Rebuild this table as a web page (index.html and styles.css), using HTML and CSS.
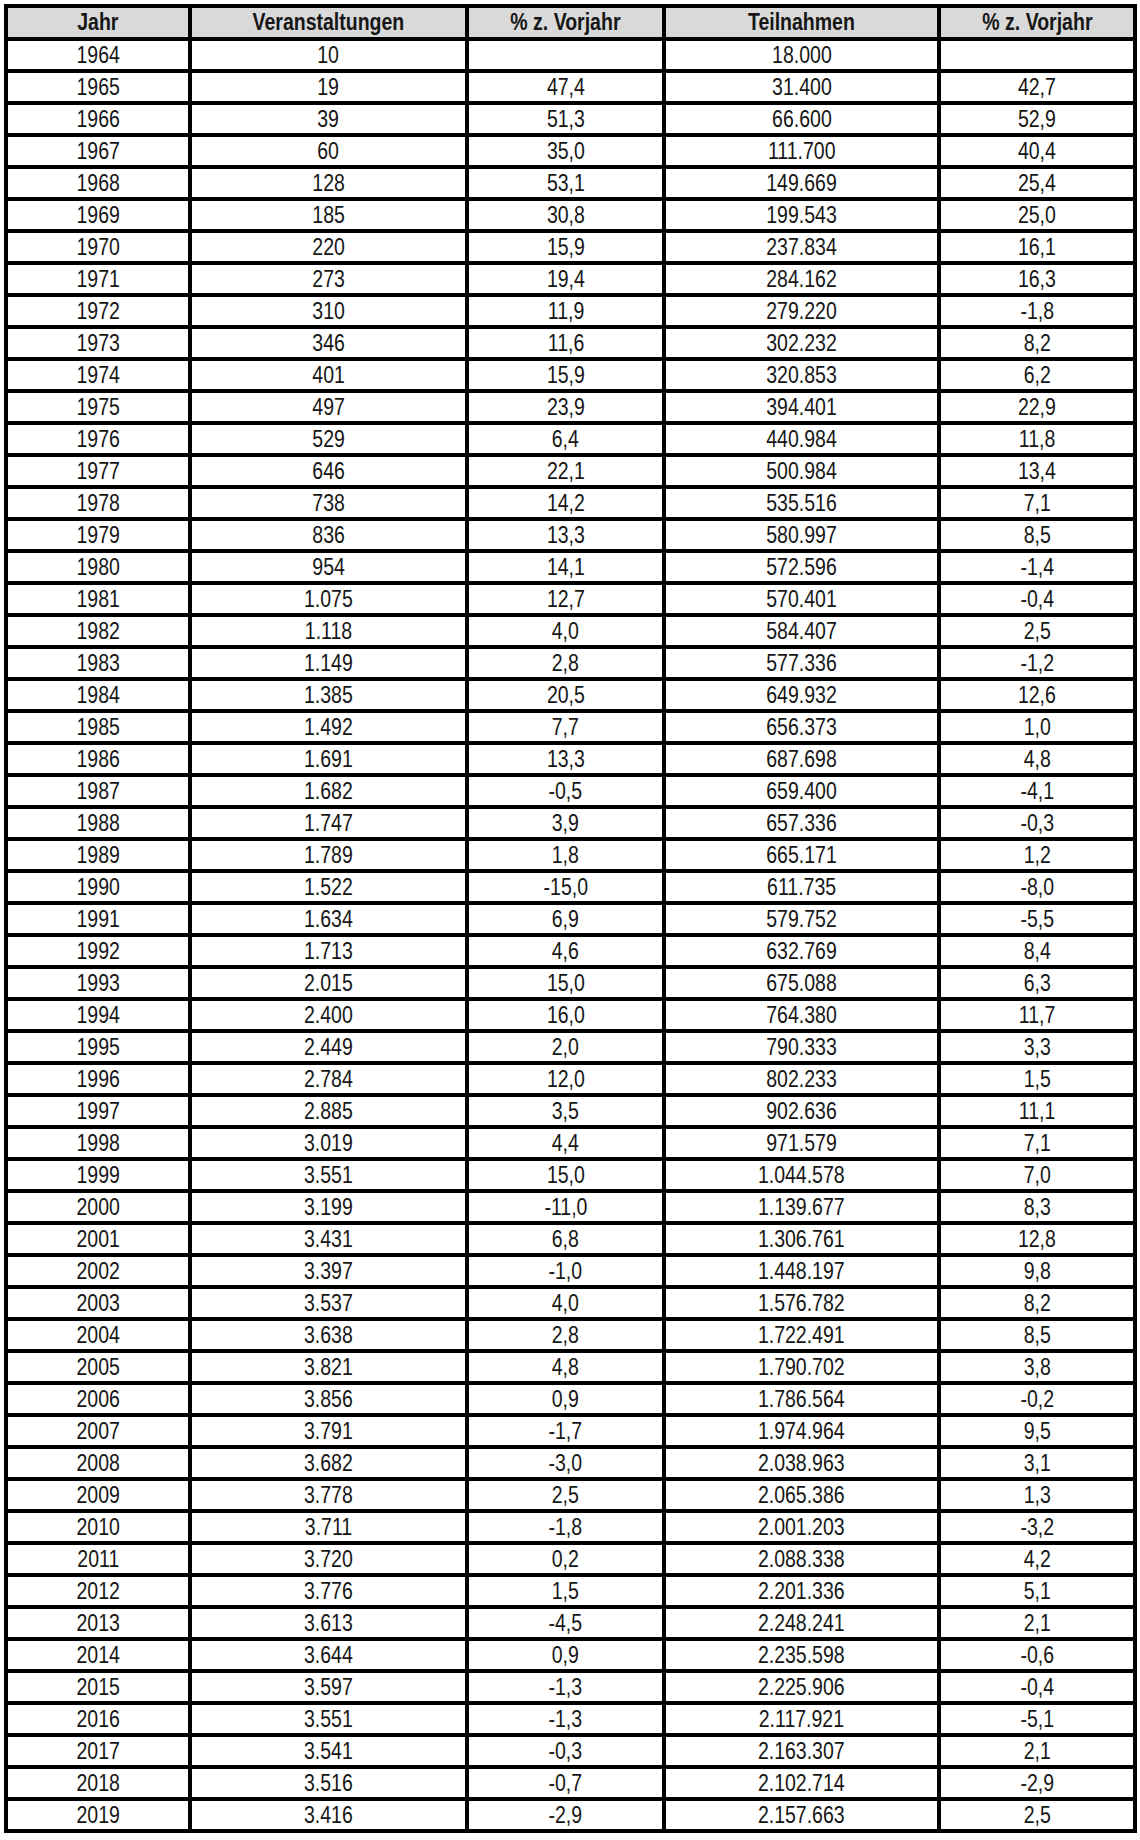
FILE: index.html
```html
<!DOCTYPE html>
<html lang="de">
<head>
<meta charset="utf-8">
<title>Veranstaltungen und Teilnahmen</title>
<link rel="stylesheet" href="styles.css">
</head>
<body>
<table class="stats">
<colgroup>
<col class="c-jahr"><col class="c-ver"><col class="c-p1"><col class="c-teil"><col class="c-p2">
</colgroup>
<thead>
<tr><th><span>Jahr</span></th><th><span>Veranstaltungen</span></th><th><span>% z. Vorjahr</span></th><th><span>Teilnahmen</span></th><th><span>% z. Vorjahr</span></th></tr>
</thead>
<tbody>
<tr><td><span>1964</span></td><td><span>10</span></td><td></td><td><span>18.000</span></td><td></td></tr>
<tr><td><span>1965</span></td><td><span>19</span></td><td><span>47,4</span></td><td><span>31.400</span></td><td><span>42,7</span></td></tr>
<tr><td><span>1966</span></td><td><span>39</span></td><td><span>51,3</span></td><td><span>66.600</span></td><td><span>52,9</span></td></tr>
<tr><td><span>1967</span></td><td><span>60</span></td><td><span>35,0</span></td><td><span>111.700</span></td><td><span>40,4</span></td></tr>
<tr><td><span>1968</span></td><td><span>128</span></td><td><span>53,1</span></td><td><span>149.669</span></td><td><span>25,4</span></td></tr>
<tr><td><span>1969</span></td><td><span>185</span></td><td><span>30,8</span></td><td><span>199.543</span></td><td><span>25,0</span></td></tr>
<tr><td><span>1970</span></td><td><span>220</span></td><td><span>15,9</span></td><td><span>237.834</span></td><td><span>16,1</span></td></tr>
<tr><td><span>1971</span></td><td><span>273</span></td><td><span>19,4</span></td><td><span>284.162</span></td><td><span>16,3</span></td></tr>
<tr><td><span>1972</span></td><td><span>310</span></td><td><span>11,9</span></td><td><span>279.220</span></td><td><span>-1,8</span></td></tr>
<tr><td><span>1973</span></td><td><span>346</span></td><td><span>11,6</span></td><td><span>302.232</span></td><td><span>8,2</span></td></tr>
<tr><td><span>1974</span></td><td><span>401</span></td><td><span>15,9</span></td><td><span>320.853</span></td><td><span>6,2</span></td></tr>
<tr><td><span>1975</span></td><td><span>497</span></td><td><span>23,9</span></td><td><span>394.401</span></td><td><span>22,9</span></td></tr>
<tr><td><span>1976</span></td><td><span>529</span></td><td><span>6,4</span></td><td><span>440.984</span></td><td><span>11,8</span></td></tr>
<tr><td><span>1977</span></td><td><span>646</span></td><td><span>22,1</span></td><td><span>500.984</span></td><td><span>13,4</span></td></tr>
<tr><td><span>1978</span></td><td><span>738</span></td><td><span>14,2</span></td><td><span>535.516</span></td><td><span>7,1</span></td></tr>
<tr><td><span>1979</span></td><td><span>836</span></td><td><span>13,3</span></td><td><span>580.997</span></td><td><span>8,5</span></td></tr>
<tr><td><span>1980</span></td><td><span>954</span></td><td><span>14,1</span></td><td><span>572.596</span></td><td><span>-1,4</span></td></tr>
<tr><td><span>1981</span></td><td><span>1.075</span></td><td><span>12,7</span></td><td><span>570.401</span></td><td><span>-0,4</span></td></tr>
<tr><td><span>1982</span></td><td><span>1.118</span></td><td><span>4,0</span></td><td><span>584.407</span></td><td><span>2,5</span></td></tr>
<tr><td><span>1983</span></td><td><span>1.149</span></td><td><span>2,8</span></td><td><span>577.336</span></td><td><span>-1,2</span></td></tr>
<tr><td><span>1984</span></td><td><span>1.385</span></td><td><span>20,5</span></td><td><span>649.932</span></td><td><span>12,6</span></td></tr>
<tr><td><span>1985</span></td><td><span>1.492</span></td><td><span>7,7</span></td><td><span>656.373</span></td><td><span>1,0</span></td></tr>
<tr><td><span>1986</span></td><td><span>1.691</span></td><td><span>13,3</span></td><td><span>687.698</span></td><td><span>4,8</span></td></tr>
<tr><td><span>1987</span></td><td><span>1.682</span></td><td><span>-0,5</span></td><td><span>659.400</span></td><td><span>-4,1</span></td></tr>
<tr><td><span>1988</span></td><td><span>1.747</span></td><td><span>3,9</span></td><td><span>657.336</span></td><td><span>-0,3</span></td></tr>
<tr><td><span>1989</span></td><td><span>1.789</span></td><td><span>1,8</span></td><td><span>665.171</span></td><td><span>1,2</span></td></tr>
<tr><td><span>1990</span></td><td><span>1.522</span></td><td><span>-15,0</span></td><td><span>611.735</span></td><td><span>-8,0</span></td></tr>
<tr><td><span>1991</span></td><td><span>1.634</span></td><td><span>6,9</span></td><td><span>579.752</span></td><td><span>-5,5</span></td></tr>
<tr><td><span>1992</span></td><td><span>1.713</span></td><td><span>4,6</span></td><td><span>632.769</span></td><td><span>8,4</span></td></tr>
<tr><td><span>1993</span></td><td><span>2.015</span></td><td><span>15,0</span></td><td><span>675.088</span></td><td><span>6,3</span></td></tr>
<tr><td><span>1994</span></td><td><span>2.400</span></td><td><span>16,0</span></td><td><span>764.380</span></td><td><span>11,7</span></td></tr>
<tr><td><span>1995</span></td><td><span>2.449</span></td><td><span>2,0</span></td><td><span>790.333</span></td><td><span>3,3</span></td></tr>
<tr><td><span>1996</span></td><td><span>2.784</span></td><td><span>12,0</span></td><td><span>802.233</span></td><td><span>1,5</span></td></tr>
<tr><td><span>1997</span></td><td><span>2.885</span></td><td><span>3,5</span></td><td><span>902.636</span></td><td><span>11,1</span></td></tr>
<tr><td><span>1998</span></td><td><span>3.019</span></td><td><span>4,4</span></td><td><span>971.579</span></td><td><span>7,1</span></td></tr>
<tr><td><span>1999</span></td><td><span>3.551</span></td><td><span>15,0</span></td><td><span>1.044.578</span></td><td><span>7,0</span></td></tr>
<tr><td><span>2000</span></td><td><span>3.199</span></td><td><span>-11,0</span></td><td><span>1.139.677</span></td><td><span>8,3</span></td></tr>
<tr><td><span>2001</span></td><td><span>3.431</span></td><td><span>6,8</span></td><td><span>1.306.761</span></td><td><span>12,8</span></td></tr>
<tr><td><span>2002</span></td><td><span>3.397</span></td><td><span>-1,0</span></td><td><span>1.448.197</span></td><td><span>9,8</span></td></tr>
<tr><td><span>2003</span></td><td><span>3.537</span></td><td><span>4,0</span></td><td><span>1.576.782</span></td><td><span>8,2</span></td></tr>
<tr><td><span>2004</span></td><td><span>3.638</span></td><td><span>2,8</span></td><td><span>1.722.491</span></td><td><span>8,5</span></td></tr>
<tr><td><span>2005</span></td><td><span>3.821</span></td><td><span>4,8</span></td><td><span>1.790.702</span></td><td><span>3,8</span></td></tr>
<tr><td><span>2006</span></td><td><span>3.856</span></td><td><span>0,9</span></td><td><span>1.786.564</span></td><td><span>-0,2</span></td></tr>
<tr><td><span>2007</span></td><td><span>3.791</span></td><td><span>-1,7</span></td><td><span>1.974.964</span></td><td><span>9,5</span></td></tr>
<tr><td><span>2008</span></td><td><span>3.682</span></td><td><span>-3,0</span></td><td><span>2.038.963</span></td><td><span>3,1</span></td></tr>
<tr><td><span>2009</span></td><td><span>3.778</span></td><td><span>2,5</span></td><td><span>2.065.386</span></td><td><span>1,3</span></td></tr>
<tr><td><span>2010</span></td><td><span>3.711</span></td><td><span>-1,8</span></td><td><span>2.001.203</span></td><td><span>-3,2</span></td></tr>
<tr><td><span>2011</span></td><td><span>3.720</span></td><td><span>0,2</span></td><td><span>2.088.338</span></td><td><span>4,2</span></td></tr>
<tr><td><span>2012</span></td><td><span>3.776</span></td><td><span>1,5</span></td><td><span>2.201.336</span></td><td><span>5,1</span></td></tr>
<tr><td><span>2013</span></td><td><span>3.613</span></td><td><span>-4,5</span></td><td><span>2.248.241</span></td><td><span>2,1</span></td></tr>
<tr><td><span>2014</span></td><td><span>3.644</span></td><td><span>0,9</span></td><td><span>2.235.598</span></td><td><span>-0,6</span></td></tr>
<tr><td><span>2015</span></td><td><span>3.597</span></td><td><span>-1,3</span></td><td><span>2.225.906</span></td><td><span>-0,4</span></td></tr>
<tr><td><span>2016</span></td><td><span>3.551</span></td><td><span>-1,3</span></td><td><span>2.117.921</span></td><td><span>-5,1</span></td></tr>
<tr><td><span>2017</span></td><td><span>3.541</span></td><td><span>-0,3</span></td><td><span>2.163.307</span></td><td><span>2,1</span></td></tr>
<tr><td><span>2018</span></td><td><span>3.516</span></td><td><span>-0,7</span></td><td><span>2.102.714</span></td><td><span>-2,9</span></td></tr>
<tr><td><span>2019</span></td><td><span>3.416</span></td><td><span>-2,9</span></td><td><span>2.157.663</span></td><td><span>2,5</span></td></tr>
</tbody>
</table>
</body>
</html>
```
FILE: styles.css
```css
html, body {
  margin: 0;
  padding: 0;
  background: #ffffff;
}

body {
  padding: 4px 0 0 4px;
  font-family: "Liberation Sans", Arial, sans-serif;
  color: #161616;
}

.stats {
  border-collapse: collapse;
  table-layout: fixed;
  width: 1129px;
  font-size: 23.5px;
}

.c-jahr { width: 184px; }
.c-ver { width: 277px; }
.c-p1 { width: 197px; }
.c-teil { width: 275px; }
.c-p2 { width: 196px; }

.stats th,
.stats td {
  border: 4px solid #000;
  padding: 0;
  text-align: center;
  vertical-align: middle;
  white-space: nowrap;
}

/* narrow (Arial Narrow–like) lettering */
.stats th span,
.stats td span {
  display: inline-block;
  transform: scaleX(0.83);
}

.stats th {
  background: #d9d9d9;
  font-weight: bold;
  font-size: 23.5px;
  height: 29px;
  line-height: 27px;
}

.stats td {
  height: 28px;
  line-height: 26px;
  font-weight: normal;
}
```
